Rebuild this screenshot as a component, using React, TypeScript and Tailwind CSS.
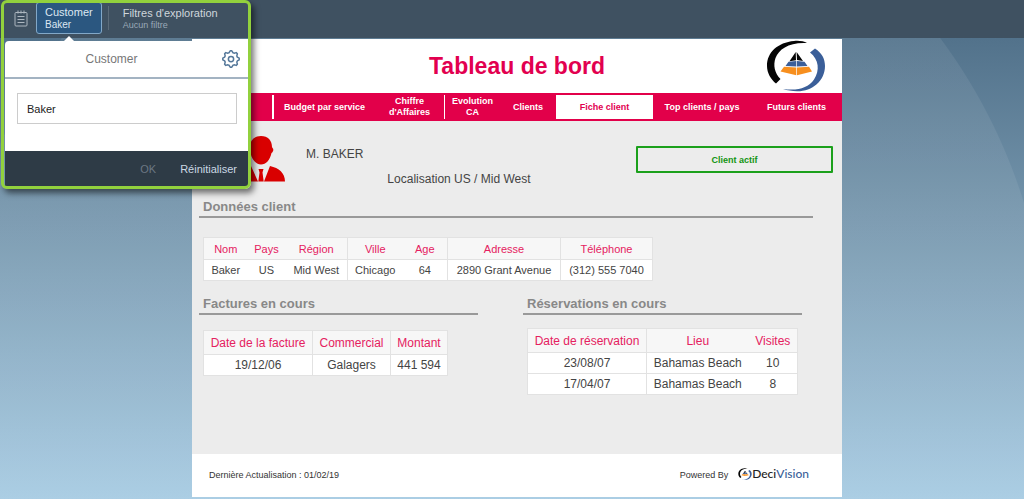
import React from 'react';

interface Column {
    label: string;
    width: string;
    divider?: boolean;
}

interface DataTableProps {
    caption: string;
    columns: Column[];
    rows: string[][];
    textClass: string;
    headClass: string;
}

const clientColumns: Column[] = [
    { label: 'Nom', width: 'w-11' },
    { label: 'Pays', width: 'w-[38px]' },
    { label: 'Région', width: 'w-[62px]', divider: true },
    { label: 'Ville', width: 'w-[55px]' },
    { label: 'Age', width: 'w-[45px]', divider: true },
    { label: 'Adresse', width: 'w-[113px]', divider: true },
    { label: 'Téléphone', width: 'w-[92px]' },
];

const invoiceColumns: Column[] = [
    { label: 'Date de la facture', width: 'w-[109px]', divider: true },
    { label: 'Commercial', width: 'w-[78px]', divider: true },
    { label: 'Montant', width: 'w-[57px]' },
];

const bookingColumns: Column[] = [
    { label: 'Date de réservation', width: 'w-[119px]', divider: true },
    { label: 'Lieu', width: 'w-[102px]' },
    { label: 'Visites', width: 'w-[49px]' },
];

const tabs = ['', 'Budget par service', "Chiffre d'Affaires", 'Evolution CA', 'Clients', 'Fiche client', 'Top clients / pays', 'Futurs clients'];

const tabClasses: Record<string, string> = {
    '': 'border-r-2 border-white',
    "Chiffre d'Affaires": 'border-r border-white px-3',
    'Evolution CA': 'px-1',
    'Fiche client': 'bg-white text-[#e2004f]',
};

const DataTable: React.FC<DataTableProps> = ({ caption, columns, rows, textClass, headClass }) => (
    <table aria-label={caption} className={`table-fixed border-collapse border border-[#e2e2e2] text-center whitespace-nowrap text-[#444] ${textClass}`}>
        <thead>
            <tr className={`bg-[#f7f7f7] text-[#e5215f] ${headClass}`}>
                {columns.map(c => (
                    <th key={c.label} scope="col" className={`p-0 font-normal ${c.width} ${c.divider ? 'border-r border-[#e2e2e2]' : ''}`}>{c.label}</th>
                ))}
            </tr>
        </thead>
        <tbody>
            {rows.map(row => (
                <tr key={row.join()} className="h-[21px] border-t border-[#e2e2e2] bg-white">
                    {row.map((cell, i) => (
                        <td key={columns[i].label} className={`p-0 ${columns[i].divider ? 'border-r border-[#e2e2e2]' : ''}`}>{cell}</td>
                    ))}
                </tr>
            ))}
        </tbody>
    </table>
);

const SectionTitle: React.FC<{ children: React.ReactNode }> = ({ children }) => (
    <h2 className="border-b-2 border-[#999] pl-1 text-[13px] leading-[18px] font-bold text-[#888]">{children}</h2>
);

const ClipboardIcon: React.FC = () => (
    <svg viewBox="0 0 14 17" className="h-[17px] w-3.5" fill="none" stroke="#adb7c0">
        <rect x="1" y="2.5" width="12" height="13.5" rx="1" />
        <path d="M4 .5v3M7 .5v3M10 .5v3M3.5 6.5h7M3.5 9.5h7M3.5 12.5h7" />
    </svg>
);

// Eight rounded teeth, two outer and two inner points for each
const gearPoints = Array.from({ length: 32 }, (_, i) => {
    const angle = ((i * 11.25 - 5.6) * Math.PI) / 180;
    const radius = i % 4 < 2 ? 11 : 8.8;
    return `${(12 + radius * Math.sin(angle)).toFixed(2)},${(12 - radius * Math.cos(angle)).toFixed(2)}`;
}).join(' ');

const GearIcon: React.FC = () => (
    <svg viewBox="0 0 24 24" className="h-[18px] w-[18px]" fill="none" stroke="#55789a" strokeWidth="2" strokeLinejoin="round">
        <circle cx="12" cy="12" r="3.5" />
        <polygon points={gearPoints} />
    </svg>
);

const PersonIcon: React.FC = () => (
    <svg viewBox="0 0 50 46" className="h-[46px] w-[50px]" fill="#d90000">
        <path d="M26 0c7 0 11 4.500 11 11l.5 1c1.500 1 .8 4-1 5C35 24 31 28.500 26 28.500S17 24 15.500 17c-2-1-2.500-4-1-5l.5-1C15 4.500 19 0 26 0z" />
        <path d="M16 30l7 15.500H0C0 37 6 33 16 30zM35 30l-6 15.500h21C50 37 44 32 35 30zM23.500 33h5l-1 3.500 1.200 9h-5.400l1.200-9z" />
    </svg>
);

const LogoMark: React.FC<{ className: string }> = ({ className }) => (
    <svg viewBox="0 0 60 52" className={className}>
        <path d="M41 3C38 1.200 33 .5 28 1 12 2.500 1 12 1 26c0 7 4 13.500 9 17.500l4.500-4.500C8.500 33 7 25 9.500 18 13 9 23 2 41 3z" fill="#050505" />
        <path d="M44 12.500l5-4C56 13 59 19 59 26c0 15-13 25.500-28 25.300-5-.2-10-1-14-2.300 15 2 25-1 31-9.500 6-9 5-20-4-27z" fill="#3b5f99" />
        <path d="M29.700 12l.3 8.300-6.500 1zM30.600 12l6.400 9-6-1z" fill="#050505" />
        <path d="M22.500 21.800l7.800-.8v5.600L19.500 26zM31 21l7.500.8 3 4.200-10.500.6z" fill="#3b5f99" />
        <path d="M18 26.800l12.300.8v7.600L14.500 31.500zM31 27.600l12-.8 3 4.700-15 3.700z" fill="#f78f1e" />
    </svg>
);

const FilterBar: React.FC = () => (
    <header className="relative flex h-[38px] items-start bg-[#3f5161]">
        <button type="button" aria-label="Invites" className="ml-3.5 mt-2.5">
            <ClipboardIcon />
        </button>
        <button type="button" className="ml-2 mt-0.5 h-8 rounded-[3px] border border-[#82a8c8] bg-[#2b5780] px-2 text-left text-[11px] leading-[13px] text-[#dde8f2]">
            Customer
            <span className="block text-[10px] leading-[11px]">Baker</span>
        </button>
        <span className="ml-1.5 mt-1.5 h-6 w-px bg-[#5b6b79]" />
        <button type="button" className="ml-3.5 mt-[7px] text-left text-[11px] leading-[13px] text-[#cfd6dc]">
            Filtres d'exploration
            <span className="block text-[9px] leading-[11px] text-[#9aa9b8]">Aucun filtre</span>
        </button>

        {/* Popover of the selected filter */}
        <div className="absolute top-[41px] left-[5px] z-10 w-[243px] rounded-t bg-white">
            <span className="absolute -top-[5px] left-[59px] border-x-[5px] border-b-[5px] border-x-transparent border-b-white" />
            <div className="flex h-[38px] items-center border-b-2 border-[#a3b3c2] pr-2">
                <label htmlFor="customer" className="flex-1 pr-1 text-center text-xs text-[#777]">Customer</label>
                <button type="button" aria-label="Paramètres">
                    <GearIcon />
                </button>
            </div>
            <div className="pt-3.5 pr-[11px] pb-[27px] pl-3">
                <input id="customer" defaultValue="Baker" className="block h-[31px] w-full border border-[#ccc] bg-white px-[9px] text-[11px] text-[#222]" />
            </div>
            <div className="flex h-[35px] items-center justify-end gap-6 bg-[#2e3b46] pt-0.5 pr-[11px] text-[11px]">
                <button type="button" disabled className="text-[#6b7783]">OK</button>
                <button type="button" className="text-[#cbd8e4]">Réinitialiser</button>
            </div>
        </div>
        <div className="pointer-events-none absolute top-0 left-[1px] z-20 h-[189px] w-[250px] rounded-md border-[3px] border-[#92d13d] shadow-[3px_4px_6px_rgba(0,0,0,0.55)]" />
    </header>
);

const App: React.FC = () => (
    <div className="flex min-h-screen flex-col font-['Liberation_Sans',Arial,sans-serif]">
        <FilterBar />
        <main className="flex-1 bg-[radial-gradient(circle_at_501px_327px,rgba(255,255,255,0.07)_547px,transparent_548px),linear-gradient(#52728b,#7596ad_40%,#a5cae2)] pt-px pl-2.5">
            <div className="mx-auto max-w-[650px]">
                <div className="grid h-[54px] grid-cols-[1fr_auto_1fr] items-center bg-white">
                    <h1 className="col-start-2 text-[23px] font-bold text-[#e2004f]">Tableau de bord</h1>
                    <div className="flex justify-end pr-4">
                        <LogoMark className="h-[52px] w-[60px]" />
                    </div>
                </div>

                <nav className="grid h-7 grid-cols-[82fr_101fr_70fr_55fr_56fr_97fr_98fr_91fr] bg-[#e2004a] py-0.5 text-[9px] leading-[11px] font-bold text-white">
                    {tabs.map(tab => (
                        <button key={tab} type="button" aria-label={tab || 'Accueil'} className={`text-center ${tabClasses[tab] ?? ''}`}>{tab}</button>
                    ))}
                </nav>

                <div className="bg-[#ececec] pb-[59px]">
                    <div className="flex items-start pt-[15px] pr-[9px] pl-[43px] text-xs text-[#444]">
                        <PersonIcon />
                        <p className="ml-[21px] pt-2.5">M. BAKER</p>
                        <p className="ml-6 pt-[35px]">Localisation US / Mid West</p>
                        <button type="button" className="mt-2.5 ml-auto h-[27px] w-[197px] rounded-[1px] border-2 border-[#1ba01b] text-[9px] font-bold text-[#129412]">Client actif</button>
                    </div>

                    <section className="mt-[11px] pr-[29px] pl-[7px]">
                        <SectionTitle>Données client</SectionTitle>
                        <div className="mt-[19px] pl-1">
                            <DataTable
                                caption="Données client"
                                columns={clientColumns}
                                rows={[['Baker', 'US', 'Mid West', 'Chicago', '64', '2890 Grant Avenue', '(312) 555 7040']]}
                                textClass="w-[449px] text-[11px] leading-4"
                                headClass="h-[22px]"
                            />
                        </div>
                    </section>

                    <div className="mt-3.5 grid grid-cols-2 gap-[45px] pr-10 pl-[7px]">
                        <section>
                            <SectionTitle>Factures en cours</SectionTitle>
                            <div className="mt-[15px] pl-1">
                                <DataTable
                                    caption="Factures en cours"
                                    columns={invoiceColumns}
                                    rows={[['19/12/06', 'Galagers', '441 594']]}
                                    textClass="w-[244px] text-xs leading-4"
                                    headClass="h-6"
                                />
                            </div>
                        </section>
                        <section>
                            <SectionTitle>Réservations en cours</SectionTitle>
                            <div className="mt-[13px] pl-1">
                                <DataTable
                                    caption="Réservations en cours"
                                    columns={bookingColumns}
                                    rows={[['23/08/07', 'Bahamas Beach', '10'], ['17/04/07', 'Bahamas Beach', '8']]}
                                    textClass="w-[270px] text-xs leading-4"
                                    headClass="h-6"
                                />
                            </div>
                        </section>
                    </div>
                </div>

                <footer className="flex h-[43px] items-center bg-white pr-[33px] pl-[17px] text-[9px] text-[#333]">
                    <p>Dernière Actualisation : 01/02/19</p>
                    <p className="ml-auto">Powered By</p>
                    <div className="ml-2.5 flex items-center pb-1 font-[Lato] text-xs leading-4 font-medium text-[#222]">
                        <LogoMark className="h-3 w-3.5" />
                        Deci<span className="text-[#3b5f99]">Vision</span>
                    </div>
                </footer>
            </div>
        </main>
    </div>
);

export default App;
